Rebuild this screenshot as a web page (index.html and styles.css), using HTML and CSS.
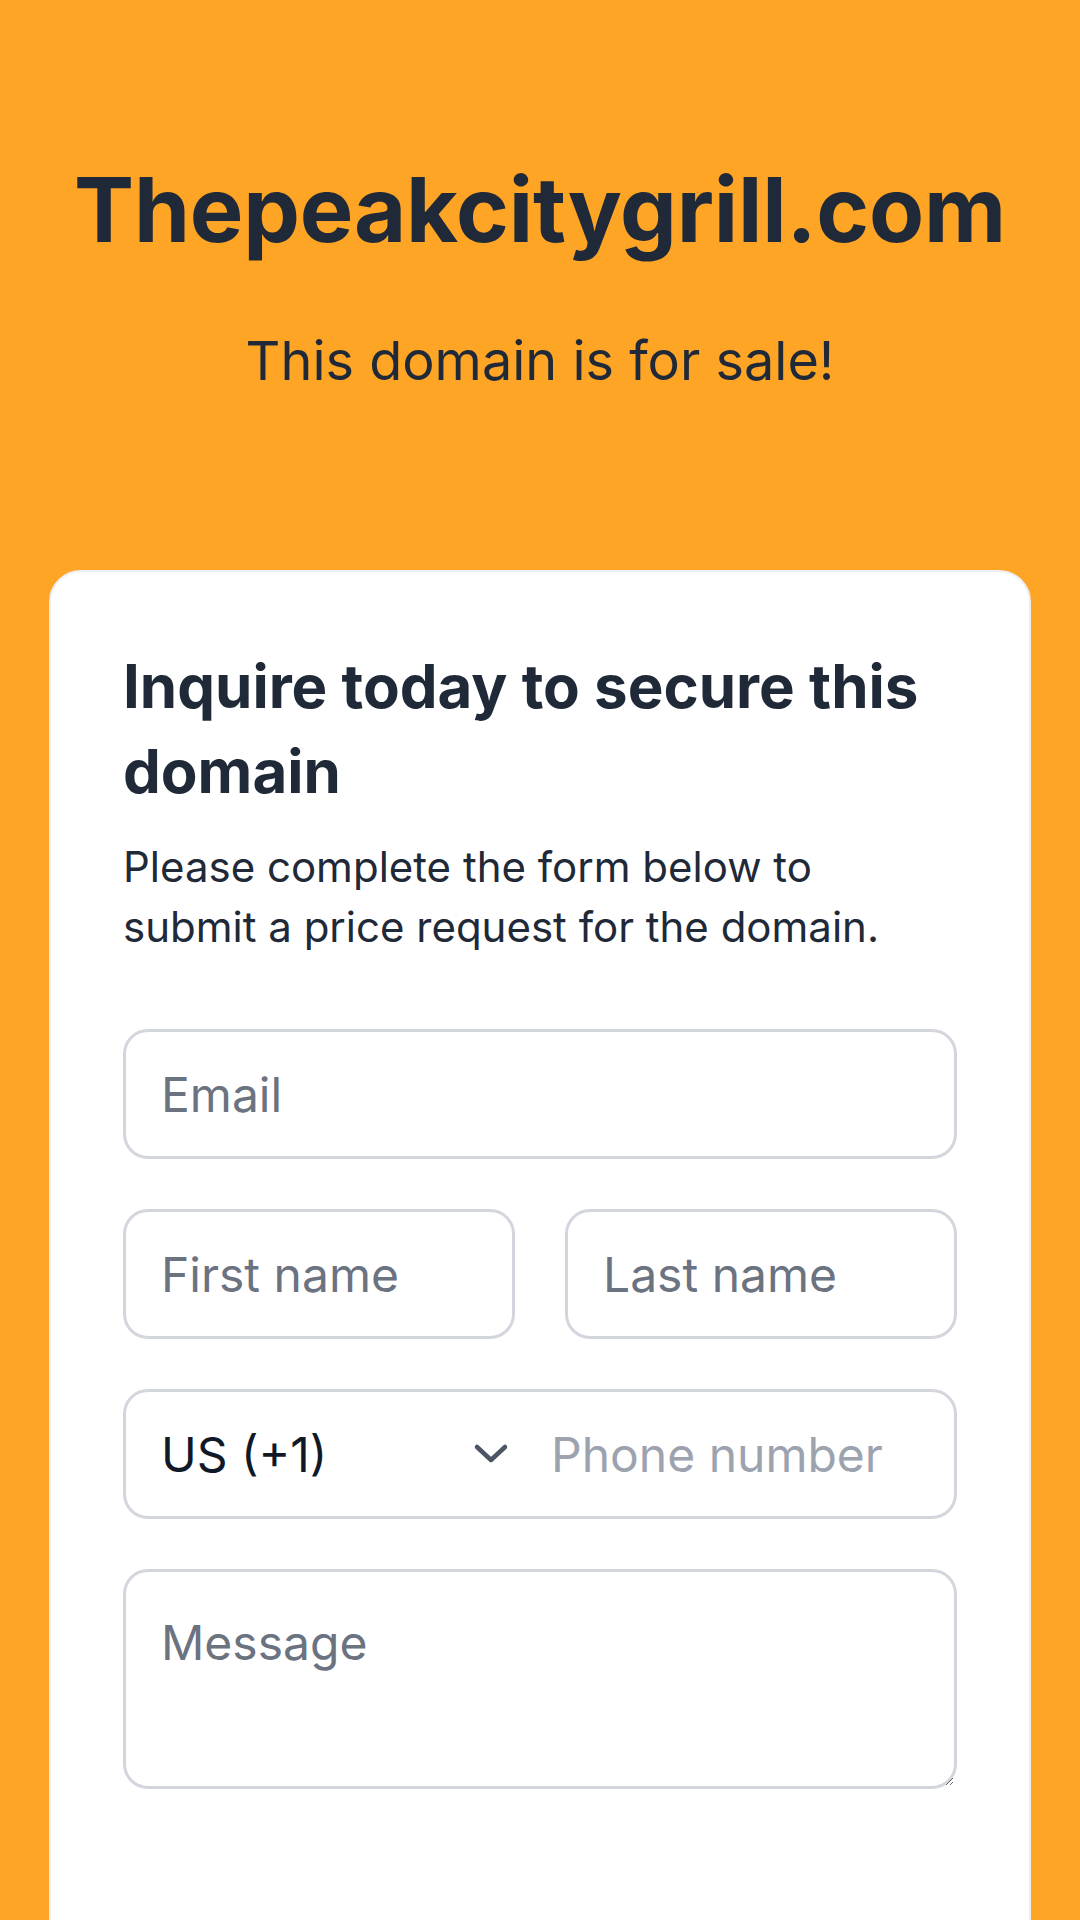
FILE: index.html
```html
<!DOCTYPE html>
<html>

<head>
  <meta charset="utf-8" />
  <meta name="viewport" content="width=device-width,initial-scale=1" />
  <title>Thepeakcitygrill.com</title>
  <link rel="stylesheet" href="styles.css">
</head>

<body>
  <div class="hero">
    <h1>Thepeakcitygrill.com</h1>
    <p class="tagline">This domain is for sale!</p>
  </div>
  <div class="card">
    <h2>Inquire today to secure this domain</h2>
    <p class="intro">Please complete the form below to submit a price request for the domain.</p>
    <form class="form" onsubmit="return false">
      <input class="field" type="email" placeholder="Email">
      <div class="row">
        <input class="field" type="text" placeholder="First name">
        <input class="field" type="text" placeholder="Last name">
      </div>
      <div class="field phone">
        <select class="country">
          <option>US (+1)</option>
        </select>
        <svg class="chevron" width="36" height="22" viewBox="0 0 36 22">
          <polyline points="4,4 18,17 32,4" fill="none" stroke="#4b5563" stroke-width="4.5" stroke-linecap="round" stroke-linejoin="round" />
        </svg>
        <input class="number" type="tel" placeholder="Phone number">
      </div>
      <textarea class="field message" placeholder="Message"></textarea>
    </form>
  </div>
</body>
</html>
```

FILE: styles.css
```css
body {
  margin: 0;
  padding: 0;
  background-color: #ffa526;
  font-family: Inter, "Noto Sans", sans-serif;
  color: #1f2937;
}

h1,
h2,
p {
  margin: 0;
  padding: 0;
}

.hero {
  text-align: center;
  padding: 155px 0 171px;
}

.hero h1 {
  font-size: 90px;
  line-height: 110px;
  font-weight: 700;
  letter-spacing: -0.2px;
}

.tagline {
  margin-top: 57px;
  font-size: 54px;
  line-height: 77px;
}

.card {
  margin: 0 49px;
  background-color: #fff;
  border: 2px solid #eceef1;
  border-radius: 32px;
  padding: 72px 72px 200px;
}

.card h2 {
  font-size: 60px;
  line-height: 85px;
  font-weight: 700;
}

.intro {
  margin-top: 23px;
  font-size: 42px;
  line-height: 60px;
}

.form {
  display: flex;
  flex-direction: column;
  gap: 50px;
  margin-top: 72px;
}

.row {
  display: flex;
  gap: 50px;
}

.row .field {
  flex: 1;
  min-width: 0;
}

.field {
  box-sizing: border-box;
  height: 130px;
  border: 3px solid #d3d6dd;
  border-radius: 25px;
  padding: 0 35px;
  font-family: inherit;
  font-size: 48px;
  color: #111827;
  background-color: #fff;
  outline: none;
}

.field::placeholder {
  color: #6b7280;
}

.phone {
  display: flex;
  align-items: center;
}

.country {
  flex: 1;
  min-width: 0;
  appearance: none;
  border: none;
  background: none;
  padding: 0;
  font-family: inherit;
  font-size: 48px;
  color: #111827;
  outline: none;
}

.chevron {
  flex-shrink: 0;
  margin-right: 42px;
}

.number {
  width: 368px;
  border: none;
  padding: 0;
  font-family: inherit;
  font-size: 48px;
  outline: none;
}

.number::placeholder {
  color: #9ca3af;
}

.message {
  height: 220px;
  padding: 35px 35px;
  line-height: 72px;
  resize: vertical;
}
```
